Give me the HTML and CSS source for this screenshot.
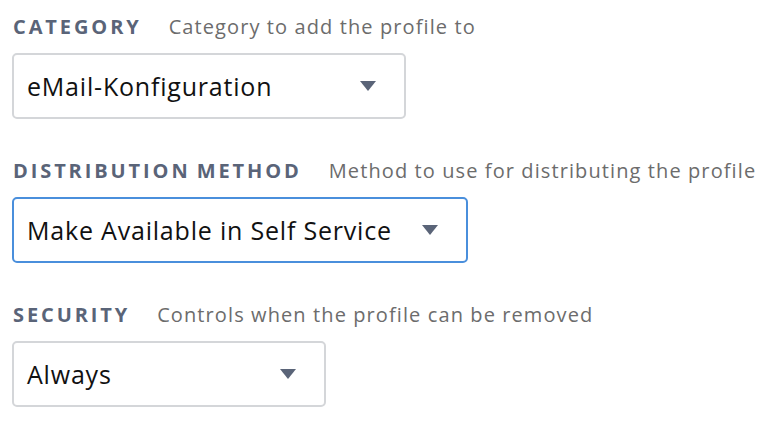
FILE: index.html
```html
<!DOCTYPE html>
<html>
<head>
<meta charset="utf-8">
<link rel="stylesheet" href="styles.css">
</head>
<body>
<div class="form">
  <div class="field">
    <div class="label-row">
      <span class="label">Category</span>
      <span class="desc">Category to add the profile to</span>
    </div>
    <div class="select w1">
      <span class="value">eMail-Konfiguration</span>
      <span class="caret"></span>
    </div>
  </div>
  <div class="field">
    <div class="label-row">
      <span class="label">Distribution Method</span>
      <span class="desc">Method to use for distributing the profile</span>
    </div>
    <div class="select w2 focused">
      <span class="value">Make Available in Self Service</span>
      <span class="caret"></span>
    </div>
  </div>
  <div class="field">
    <div class="label-row">
      <span class="label">Security</span>
      <span class="desc">Controls when the profile can be removed</span>
    </div>
    <div class="select w3">
      <span class="value">Always</span>
      <span class="caret"></span>
    </div>
  </div>
</div>
</body>
</html>
```
FILE: styles.css
```css
html, body {
  margin: 0;
  padding: 0;
  background: #ffffff;
}
body {
  font-family: "Open Sans", Lato, sans-serif;
}
.form {
  padding: 15px 0 0 12px;
  display: flex;
  flex-direction: column;
  gap: 40px;
}
.field {
  display: flex;
  flex-direction: column;
  gap: 14px;
}
.label-row {
  display: flex;
  align-items: baseline;
  gap: 27px;
  height: 24px;
  line-height: 24px;
  padding-left: 1px;
}
.label {
  text-transform: uppercase;
  font-weight: 700;
  font-size: 20px;
  letter-spacing: 2.9px;
  word-spacing: -2px;
  color: #5a6478;
}
.desc {
  font-size: 20px;
  letter-spacing: 1.1px;
  color: #6c6c6c;
}
.select {
  box-sizing: border-box;
  height: 66px;
  border: 2px solid #d4d6d9;
  border-radius: 5px;
  display: flex;
  align-items: center;
  justify-content: space-between;
  padding: 0 28px 0 13px;
}
.select.focused {
  border-color: #4a8fdc;
}
.w1 { width: 394px; }
.w2 { width: 456px; }
.w3 { width: 314px; }
.value {
  font-size: 25px;
  letter-spacing: 0.8px;
  color: #111111;
}
.caret {
  width: 0;
  height: 0;
  border-left: 8px solid transparent;
  border-right: 8px solid transparent;
  border-top: 10px solid #5a6478;
}
```
